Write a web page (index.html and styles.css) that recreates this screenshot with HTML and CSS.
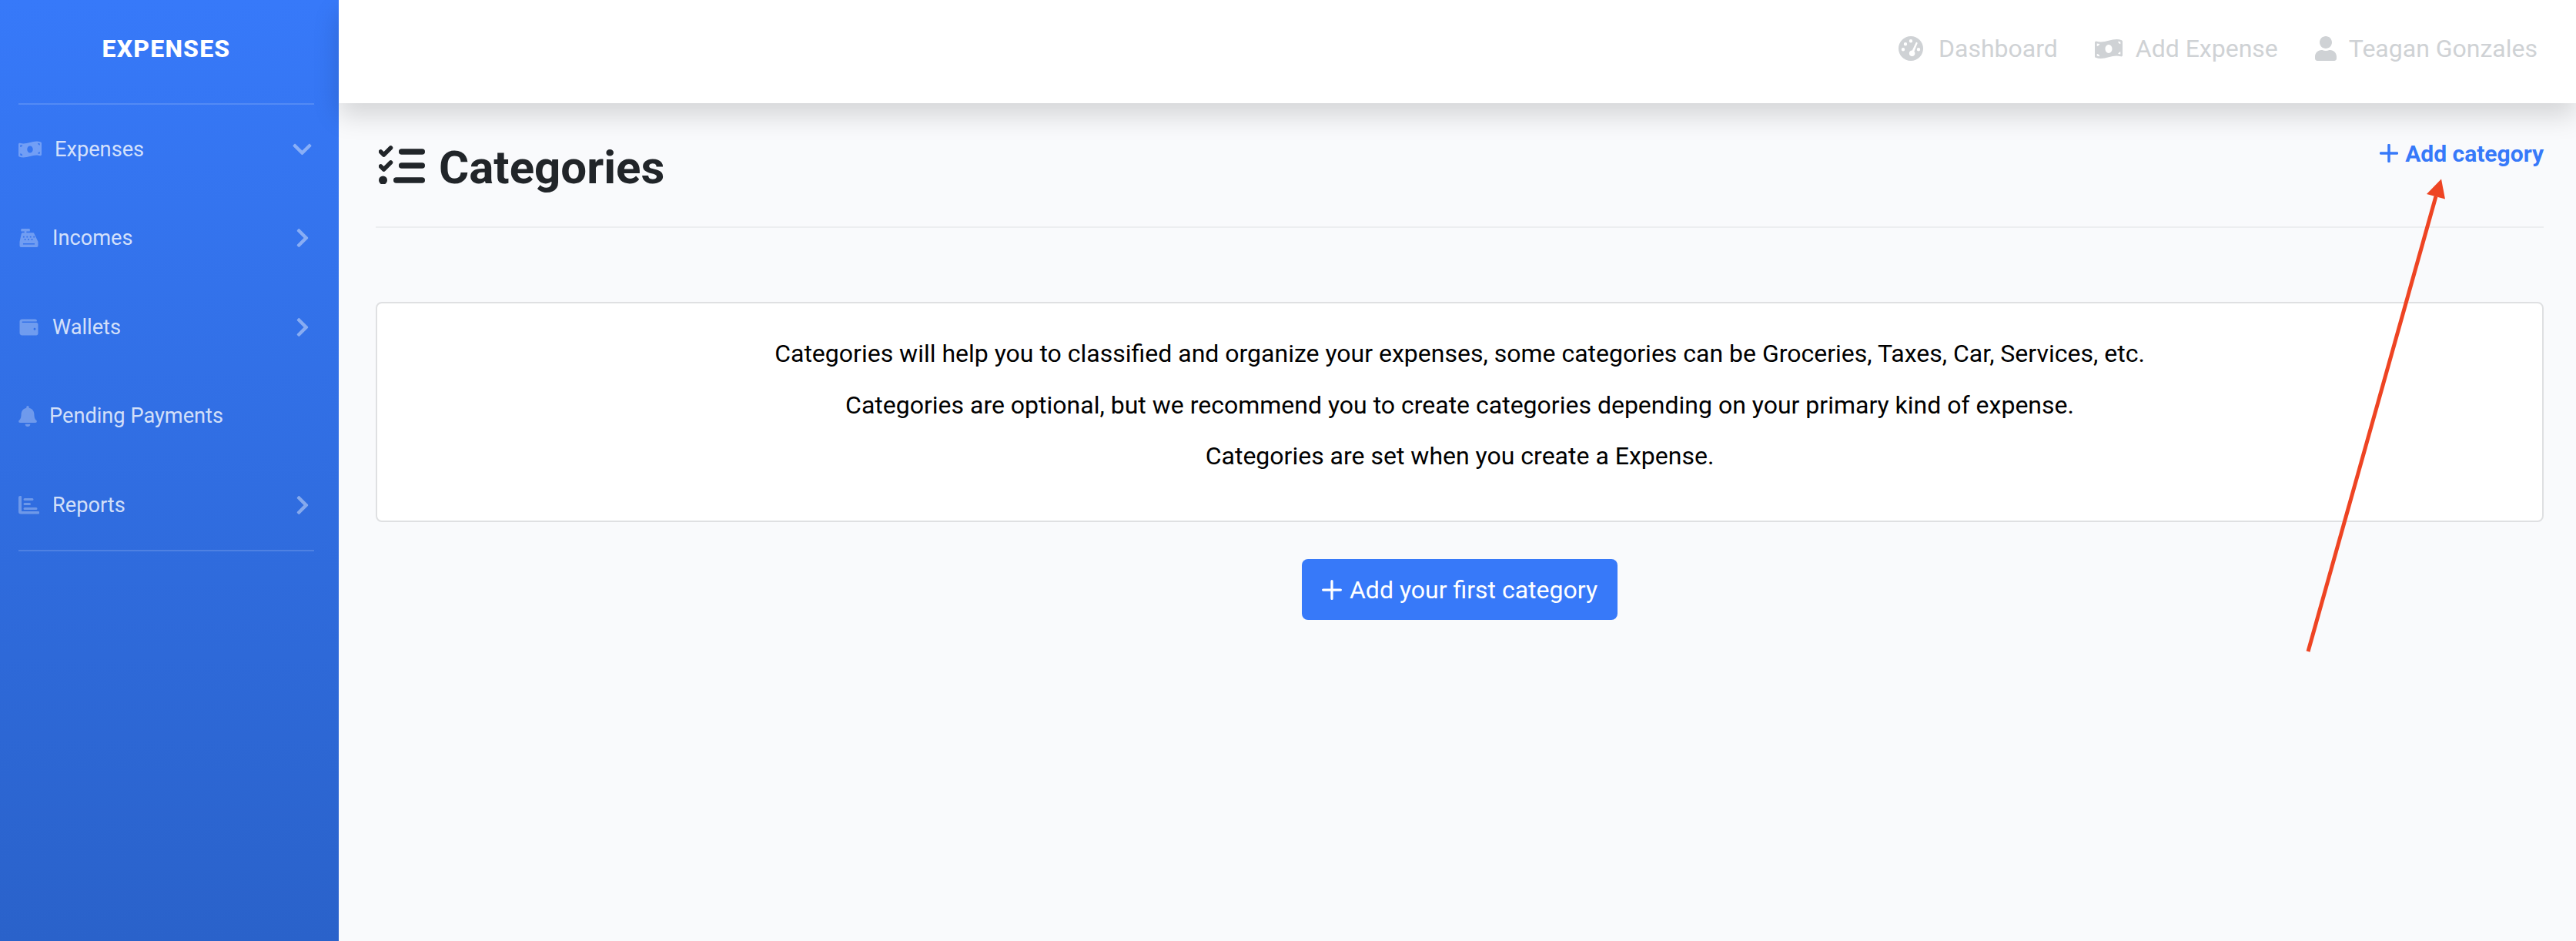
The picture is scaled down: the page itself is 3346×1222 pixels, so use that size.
FILE: index.html
```html
<!DOCTYPE html>
<html lang="en">
<head>
<meta charset="utf-8">
<title>Categories</title>
<link rel="stylesheet" href="styles.css">
</head>
<body>
<aside class="sidebar">
  <div class="brand">EXPENSES</div>
  <hr class="side-rule">
  <nav class="side-nav">
    <a class="side-item">
      <svg class="ico ico-bill" viewBox="0 0 640 512"><path d="M621.16 54.46C582.37 38.19 543.55 32 504.75 32c-123.17-.01-246.33 62.34-369.5 62.34-30.89 0-61.76-3.92-92.65-13.72-3.47-1.1-6.95-1.62-10.35-1.62C15.04 79 0 92.32 0 110.81v317.26c0 12.63 7.23 24.6 18.84 29.46C57.63 473.81 96.45 480 135.25 480c123.17 0 246.34-62.35 369.51-62.35 30.89 0 61.76 3.92 92.65 13.72 3.47 1.1 6.95 1.62 10.35 1.62 17.21 0 32.25-13.32 32.25-31.81V83.93c-.01-12.64-7.24-24.6-18.85-29.47zM48 132.22c20.12 5.04 41.12 7.57 62.72 8.93C104.84 170.54 79 192.69 48 192.69v-60.47zm0 285.2v-47.78c34.37 0 62.18 27.27 63.71 61.4-22.53-1.81-43.59-6.31-63.71-13.62zM320 352c-44.19 0-80-42.99-80-96 0-53.02 35.82-96 80-96s80 42.98 80 96c0 53.03-35.83 96-80 96zm272 27.78c-17.52-4.39-35.71-6.85-54.32-8.44 5.87-26.08 27.5-45.88 54.32-49.28v57.72zm0-236.11c-30.89-3.91-54.86-29.7-55.81-61.55 19.54 2.17 38.09 6.23 55.81 12.66v48.89z"/></svg>
      <span class="side-label">Expenses</span>
      <svg class="chev chev-down" viewBox="0 0 448 512"><path d="M207.029 381.476L12.686 187.132c-9.373-9.373-9.373-24.569 0-33.941l22.667-22.667c9.357-9.357 24.522-9.375 33.901-.04L224 284.505l154.745-154.021c9.379-9.335 24.544-9.317 33.901.04l22.667 22.667c9.373 9.373 9.373 24.569 0 33.941L240.971 381.476c-9.373 9.372-24.569 9.372-33.942 0z"/></svg>
    </a>
    <a class="side-item">
      <svg class="ico ico-wide" viewBox="0 0 27 27"><path fill-rule="evenodd" d="M3 0h11a1 1 0 0 1 1 1v2a1 1 0 0 1-1 1h-4v2h9.500a2 2 0 0 1 2 1.600L27 19v6a2 2 0 0 1-2 2H2a2 2 0 0 1-2-2v-6L2.500 7.600A2 2 0 0 1 4.500 6H7V4H3a1 1 0 0 1-1-1V1a1 1 0 0 1 1-1zM5 11v2h2v-2zm5 0v2h2v-2zm5 0v2h2v-2zm5 0v2h2v-2zM7 15v2h2v-2zm5 0v2h2v-2zm5 0v2h2v-2zM5 21.500v1.500h17v-1.500z"/></svg>
      <span class="side-label">Incomes</span>
      <svg class="chev chev-right" viewBox="0 0 320 512"><path d="M285.476 272.971L91.132 467.314c-9.373 9.373-24.569 9.373-33.941 0l-22.667-22.667c-9.357-9.357-9.375-24.522-.04-33.901L188.505 256 34.484 101.255c-9.335-9.379-9.317-24.544.04-33.901l22.667-22.667c9.373-9.373 24.569-9.373 33.941 0L285.475 239.03c9.373 9.372 9.373 24.568.001 33.941z"/></svg>
    </a>
    <a class="side-item">
      <svg class="ico ico-wide" viewBox="0 0 512 512"><path d="M461.200 128H80c-8.840 0-16-7.160-16-16s7.160-16 16-16h384c8.840 0 16-7.160 16-16 0-26.510-21.490-48-48-48H64C28.650 32 0 60.650 0 96v320c0 35.350 28.650 64 64 64h397.200c28.020 0 50.800-21.530 50.800-48V176c0-26.470-22.780-48-50.800-48zM416 336c-17.670 0-32-14.330-32-32s14.330-32 32-32 32 14.330 32 32-14.330 32-32 32z"/></svg>
      <span class="side-label">Wallets</span>
      <svg class="chev chev-right" viewBox="0 0 320 512"><path d="M285.476 272.971L91.132 467.314c-9.373 9.373-24.569 9.373-33.941 0l-22.667-22.667c-9.357-9.357-9.375-24.522-.04-33.901L188.505 256 34.484 101.255c-9.335-9.379-9.317-24.544.04-33.901l22.667-22.667c9.373-9.373 24.569-9.373 33.941 0L285.475 239.03c9.373 9.372 9.373 24.568.001 33.941z"/></svg>
    </a>
    <a class="side-item">
      <svg class="ico ico-bell" viewBox="0 0 448 512"><path d="M224 512c35.320 0 63.970-28.650 63.970-64H160.030c0 35.350 28.650 64 63.970 64zm215.390-149.710c-19.320-20.760-55.470-51.990-55.470-154.290 0-77.700-54.480-139.900-127.940-155.160V32c0-17.670-14.320-32-31.980-32s-31.980 14.330-31.980 32v20.840C118.560 68.100 64.080 130.300 64.080 208c0 102.300-36.150 133.530-55.470 154.290-6 6.450-8.660 14.160-8.610 21.710.11 16.400 12.980 32 32.100 32h383.800c19.120 0 32-15.600 32.100-32 .05-7.550-2.610-15.270-8.610-21.710z"/></svg>
      <span class="side-label">Pending Payments</span>
    </a>
    <a class="side-item">
      <svg class="ico ico-wide" viewBox="0 0 27 24"><path d="M2 0h1a1 1 0 0 1 1 1v19h22a1 1 0 0 1 1 1v1.500a1 1 0 0 1-1 1H3a3 3 0 0 1-3-3V2a2 2 0 0 1 2-2zM8 3h10a1 1 0 0 1 0 3H8a1 1 0 0 1 0-3zM8 9h6.500a1 1 0 0 1 0 3H8a1 1 0 0 1 0-3zM8 15h15a1 1 0 0 1 0 3H8a1 1 0 0 1 0-3z"/></svg>
      <span class="side-label">Reports</span>
      <svg class="chev chev-right" viewBox="0 0 320 512"><path d="M285.476 272.971L91.132 467.314c-9.373 9.373-24.569 9.373-33.941 0l-22.667-22.667c-9.357-9.357-9.375-24.522-.04-33.901L188.505 256 34.484 101.255c-9.335-9.379-9.317-24.544.04-33.901l22.667-22.667c9.373-9.373 24.569-9.373 33.941 0L285.475 239.03c9.373 9.372 9.373 24.568.001 33.941z"/></svg>
    </a>
  </nav>
  <hr class="side-rule">
</aside>
<div class="main">
  <header class="topbar">
    <a class="top-link">
      <svg class="top-ico top-ico-gauge" viewBox="0 0 32 32"><path fill-rule="evenodd" d="M16 0a16 16 0 1 1 0 32a16 16 0 0 1 0-32zM16 4a2.200 2.200 0 1 0 0 4.400a2.200 2.200 0 0 0 0-4.400zM9 8a2.200 2.200 0 1 0 0 4.400a2.200 2.200 0 0 0 0-4.400zM6 15a2.200 2.200 0 1 0 0 4.400a2.200 2.200 0 0 0 0-4.400zM26 15a2.200 2.200 0 1 0 0 4.400a2.200 2.200 0 0 0 0-4.400zM22.500 8.500L17.800 18.500a3.800 3.800 0 1 0 2.600 1.200L24.500 9.500a1.100 1.100 0 0 0-2-1z"/></svg>
      <span>Dashboard</span>
    </a>
    <a class="top-link">
      <svg class="top-ico top-ico-bill" viewBox="0 0 640 512"><path d="M621.16 54.46C582.37 38.19 543.55 32 504.75 32c-123.17-.01-246.33 62.34-369.5 62.34-30.89 0-61.76-3.92-92.65-13.72-3.47-1.1-6.95-1.62-10.35-1.62C15.04 79 0 92.32 0 110.81v317.26c0 12.63 7.23 24.6 18.84 29.46C57.63 473.81 96.45 480 135.25 480c123.17 0 246.34-62.35 369.51-62.35 30.89 0 61.76 3.92 92.65 13.72 3.47 1.1 6.95 1.62 10.35 1.62 17.21 0 32.25-13.32 32.25-31.81V83.93c-.01-12.64-7.24-24.6-18.85-29.47zM48 132.22c20.12 5.04 41.12 7.57 62.72 8.93C104.84 170.54 79 192.69 48 192.69v-60.47zm0 285.2v-47.78c34.37 0 62.18 27.27 63.71 61.4-22.53-1.81-43.59-6.31-63.71-13.62zM320 352c-44.19 0-80-42.99-80-96 0-53.02 35.82-96 80-96s80 42.98 80 96c0 53.03-35.83 96-80 96zm272 27.78c-17.52-4.39-35.71-6.85-54.32-8.44 5.87-26.08 27.5-45.88 54.32-49.28v57.72zm0-236.11c-30.89-3.91-54.86-29.7-55.81-61.55 19.54 2.17 38.09 6.23 55.81 12.66v48.89z"/></svg>
      <span>Add Expense</span>
    </a>
    <a class="top-link">
      <svg class="top-ico top-ico-user" viewBox="0 0 448 512"><path d="M224 256c70.700 0 128-57.300 128-128S294.700 0 224 0 96 57.300 96 128s57.300 128 128 128zm89.600 32h-16.700c-22.200 10.200-46.900 16-72.900 16s-50.600-5.800-72.900-16h-16.700C60.200 288 0 348.200 0 422.400V464c0 26.500 21.500 48 48 48h352c26.500 0 48-21.500 48-48v-41.600c0-74.200-60.200-134.400-134.400-134.400z"/></svg>
      <span>Teagan Gonzales</span>
    </a>
  </header>
  <main class="content">
    <div class="page-head">
      <h1 class="page-title">
        <svg class="title-ico" viewBox="0 0 60 50"><path class="tasks-stroke" d="M2.500 8l4 4L15.500 3M2.500 27l4 4L15.500 22"/><circle cx="5.500" cy="45" r="5.500"/><path class="tasks-bar" d="M29.700 8h26.550M29.700 26h26.550M22.750 45h33.500"/></svg>
        <span>Categories</span>
      </h1>
      <a class="head-action">
        <svg class="plus plus-head" viewBox="0 0 24 24"><path d="M12 1.500v21M1.500 12h21"/></svg>
        <span>Add category</span>
      </a>
    </div>
    <section class="info-card">
      <p>Categories will help you to classified and organize your expenses, some categories can be Groceries, Taxes, Car, Services, etc.</p>
      <p>Categories are optional, but we recommend you to create categories depending on your primary kind of expense.</p>
      <p>Categories are set when you create a Expense.</p>
    </section>
    <div class="cta-row">
      <a class="cta">
        <svg class="plus plus-cta" viewBox="0 0 24 24"><path d="M12 1.500v21M1.500 12h21"/></svg>
        <span>Add your first category</span>
      </a>
    </div>
  </main>
</div>
<svg class="arrow" viewBox="0 0 200 630"><path class="arrow-line" d="M8 621L174 30"/><path class="arrow-head" d="M181 7.500L186 33.500L162 27Z"/></svg>
</body>
</html>
```

FILE: styles.css
```css
* { box-sizing: border-box; }
html, body { height: 100%; }
body {
  margin: 0;
  display: flex;
  min-height: 1222px;
  height: 1222px;
  overflow: hidden;
  font-family: Roboto, "Liberation Sans", sans-serif;
  background: #f9fafc;
  color: #000;
}
a { color: inherit; text-decoration: none; }

.sidebar {
  width: 440px;
  flex: none;
  padding: 0 24px 0 24px;
  background: linear-gradient(180deg, #3779f9 0%, #2a62ca 100%);
}
.brand {
  height: 134px;
  margin: 0 8px 0 0;
  padding-bottom: 8px;
  display: flex;
  align-items: center;
  justify-content: center;
  color: #fff;
  font-size: 32px;
  font-weight: 800;
  letter-spacing: 1.2px;
}
.side-rule {
  margin: 0;
  width: 384px;
  height: 2px;
  border: 0;
  background: rgba(255, 255, 255, 0.15);
}
.side-item {
  height: 115.5px;
  display: flex;
  align-items: center;
  color: rgba(255, 255, 255, 0.8);
  font-size: 27.2px;
}
.side-label { flex: 1; }
.ico { fill: rgba(255, 255, 255, 0.3); flex: none; margin-right: 17px; }
.ico-bill { width: 30px; height: 24px; }
.ico-wide { width: 27px; height: 24px; }
.ico-bell { width: 24px; height: 27px; margin-right: 16px; }
.chev { fill: rgba(255, 255, 255, 0.42); flex: none; }
.chev-right { width: 18px; height: 28px; margin-right: 14.5px; }
.chev-down { width: 25px; height: 28px; margin-right: 11.5px; }

.main { flex: 1; min-width: 0; display: flex; flex-direction: column; }
.topbar {
  height: 134px;
  flex: none;
  display: flex;
  align-items: center;
  justify-content: flex-end;
  gap: 48px;
  padding: 0 50px 8px 0;
  background: #fff;
  box-shadow: 0 16px 32px rgba(0, 0, 0, 0.15);
  color: #cfd2d5;
  font-size: 32px;
}
.top-link { display: flex; align-items: center; }
.top-ico { fill: #cfd2d5; flex: none; }
.top-ico-gauge { width: 32px; height: 32px; margin-right: 20px; }
.top-ico-bill { width: 36px; height: 29px; margin-right: 17px; }
.top-ico-user { width: 28px; height: 32px; margin-right: 16px; }

.content { padding: 0 42px 0 48px; }
.page-head {
  height: 162px;
  display: flex;
  justify-content: space-between;
  border-bottom: 2px solid #eceef0;
}
.page-title {
  margin: 48px 0 0;
  height: 72px;
  display: flex;
  align-items: center;
  gap: 18px;
  font-size: 60px;
  font-weight: 700;
  line-height: 72px;
  color: #212529;
}
.title-ico { width: 60px; height: 50px; fill: #212529; margin: 0 0 8px 4px; flex: none; }
.tasks-stroke { fill: none; stroke: #212529; stroke-width: 5.5; stroke-linecap: round; stroke-linejoin: round; }
.tasks-bar { fill: none; stroke: #212529; stroke-width: 7.5; stroke-linecap: round; }
.head-action {
  margin-top: 45px;
  height: 40px;
  display: flex;
  align-items: center;
  gap: 9px;
  color: #3779f9;
  font-size: 30px;
  font-weight: 700;
}
.plus { fill: none; stroke-linecap: round; flex: none; }
.plus-head { width: 24px; height: 24px; stroke: #3779f9; stroke-width: 3.5; }
.info-card {
  margin-top: 96px;
  height: 286px;
  padding: 41px 32px 0;
  background: #fff;
  border: 2px solid #dfe0e2;
  border-radius: 8px;
  text-align: center;
  font-size: 32px;
  line-height: 48px;
}
.info-card p { margin: 0 0 18.5px; }
.cta-row { margin-top: 48px; display: flex; justify-content: center; }
.cta {
  width: 410px;
  height: 79px;
  display: flex;
  align-items: center;
  justify-content: center;
  gap: 10px;
  background: #3779f9;
  border-radius: 8px;
  color: #fff;
  font-size: 32px;
}
.plus-cta { width: 26px; height: 26px; stroke: #fff; stroke-width: 3; }

.arrow {
  position: absolute;
  left: 2990px;
  top: 225px;
  width: 200px;
  height: 630px;
}
.arrow-line { stroke: #ee4423; stroke-width: 5; fill: none; }
.arrow-head { fill: #ee4423; }
```
